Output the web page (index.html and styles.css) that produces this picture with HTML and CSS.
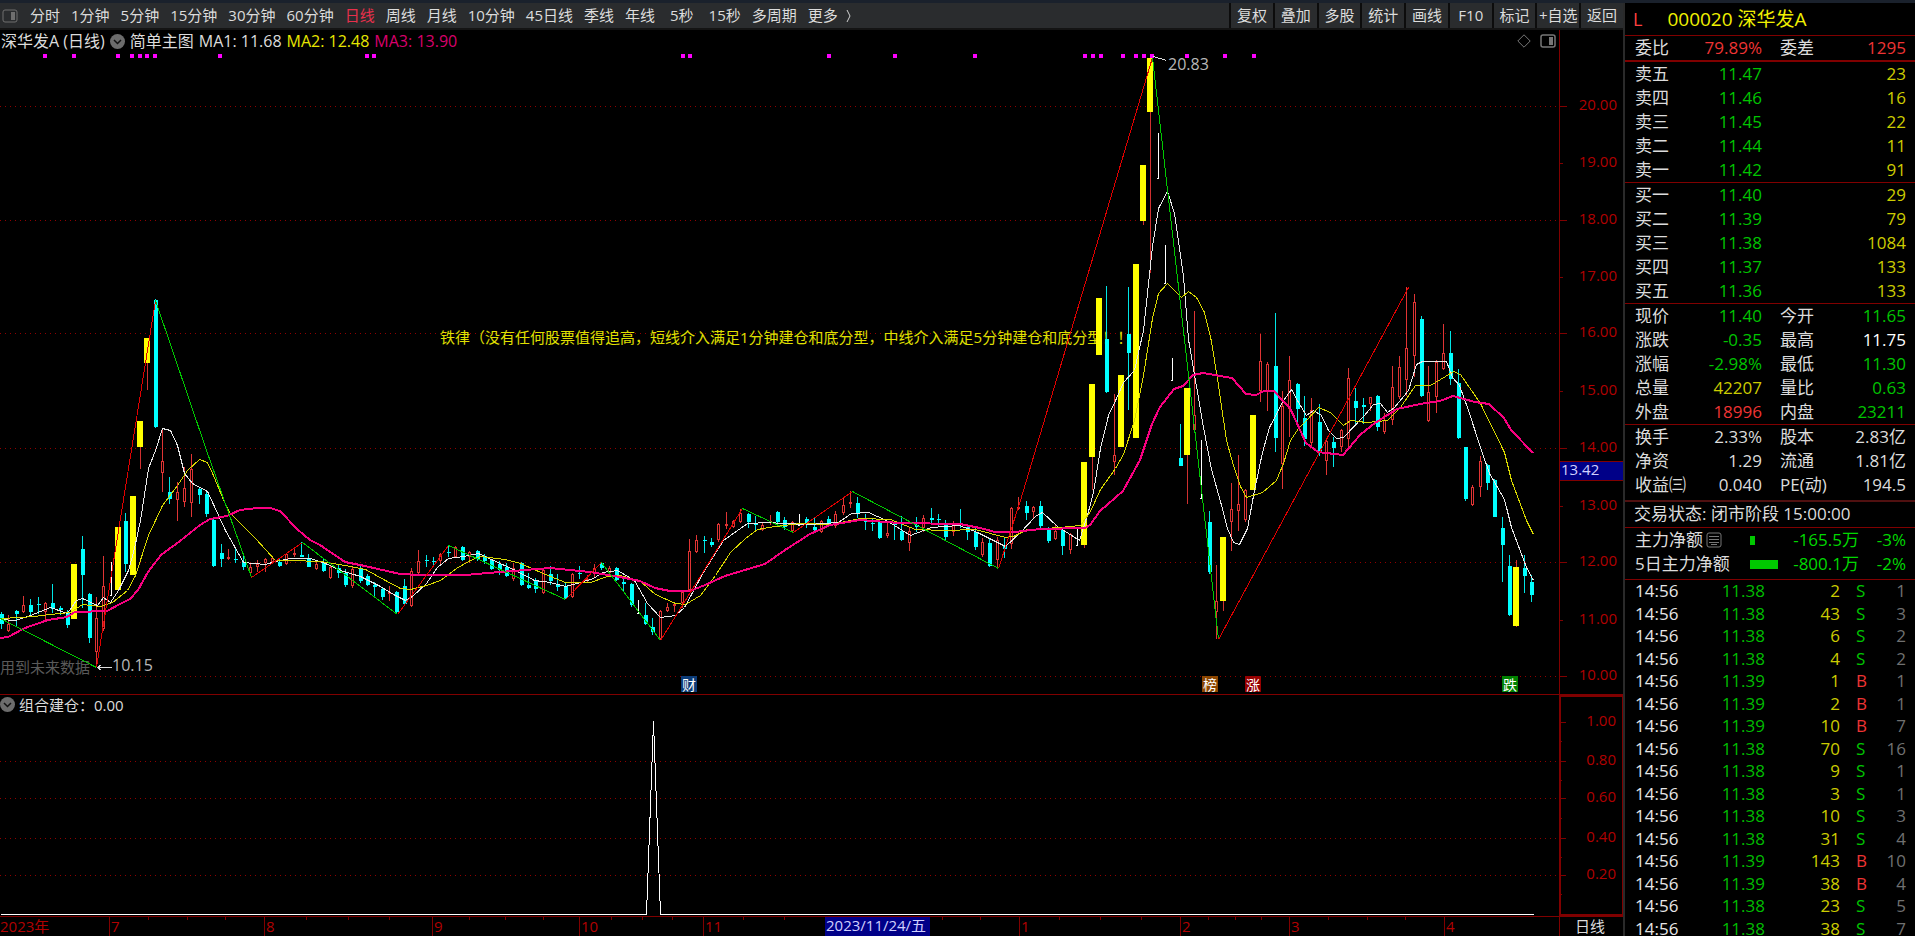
FILE: index.html
```html
<!DOCTYPE html>
<html lang="zh-CN">
<head>
<meta charset="utf-8">
<title>深华发A 日线</title>
<link rel="stylesheet" href="styles.css">
</head>
<body>
<div class="topstrip"></div>
<div class="app">
  <main class="main">
    <nav class="toolbar">
      <div class="periods">
        <button class="panel-toggle" aria-label="侧栏"><svg width="16" height="14" viewBox="0 0 16 14"><rect x="1" y="1" width="14" height="12" rx="2" fill="none" stroke="#6e6e6e"/><rect x="9" y="3" width="4" height="8" fill="#6e6e6e"/></svg></button>
        <button>分时</button><button>1分钟</button><button>5分钟</button><button>15分钟</button><button>30分钟</button><button>60分钟</button><button class="active">日线</button><button>周线</button><button>月线</button><button>10分钟</button><button>45日线</button><button>季线</button><button>年线</button><button class="sec">5秒</button><button class="sec">15秒</button><button>多周期</button><button class="more">更多<svg width="6" height="16" viewBox="0 0 6 16"><path d="M1 2L4 8L1 14" fill="none" stroke="#d0d0d0"/></svg></button>
      </div>
      <div class="tools">
        <button>复权</button><button>叠加</button><button>多股</button><button>统计</button><button>画线</button><button>F10</button><button>标记</button><button>+自选</button><button>返回</button>
      </div>
    </nav>
    <section class="pane price">
      <div class="plot">
        <div class="info">
          <span>深华发A (日线)</span>
          <button class="chev" aria-label="指标"><svg width="15" height="15" viewBox="0 0 15 15"><circle cx="7.500" cy="7.500" r="7.500" fill="#6c6c6c"/><path d="M4 6L7.500 9.500L11 6" fill="none" stroke="#111" stroke-width="1.500"/></svg></button>
          <span>简单主图</span>
          <span class="ma1">MA1: 11.68</span>
          <span class="ma2">MA2: 12.48</span>
          <span class="ma3">MA3: 13.90</span>
          <span class="corner">
            <svg width="14" height="14" viewBox="0 0 14 14"><path d="M7 .8L13.200 7L7 13.200L.8 7Z" fill="none" stroke="#777"/></svg>
            <svg width="16" height="14" viewBox="0 0 16 14"><rect x="1" y="1" width="14" height="12" rx="2" fill="none" stroke="#777" stroke-width="1.500"/><rect x="9" y="3" width="4" height="8" fill="#777"/></svg>
          </span>
        </div>
        <div class="canvas"><svg id="price"></svg></div>
      </div>
      <div class="scale"><svg id="priceScale"></svg></div>
    </section>
    <section class="pane signal">
      <div class="plot">
        <div class="info">
          <button class="chev" aria-label="指标"><svg width="15" height="15" viewBox="0 0 15 15"><circle cx="7.500" cy="7.500" r="7.500" fill="#6c6c6c"/><path d="M4 6L7.500 9.500L11 6" fill="none" stroke="#111" stroke-width="1.500"/></svg></button>
          <span>组合建仓：0.00</span>
        </div>
        <div class="canvas"><svg id="signal"></svg></div>
      </div>
      <div class="scale boxed"><svg id="signalScale"></svg></div>
    </section>
    <section class="dates">
      <div class="canvas"><svg id="dates"></svg></div>
      <div class="period-name">日线</div>
    </section>
  </main>
  <aside class="side">
    <header class="stock"><b class="flag">L</b><h1>000020 深华发A</h1></header>
    <table class="q double">
      <colgroup><col class="k"><col class="v"><col class="k2"><col></colgroup>
      <tr><th>委比</th><td class="r">79.89%</td><th>委差</th><td class="r">1295</td></tr>
    </table>
    <table class="q">
      <colgroup><col class="k"><col class="v"><col></colgroup>
      <tr><th>卖五</th><td class="g">11.47</td><td class="y">23</td></tr>
      <tr><th>卖四</th><td class="g">11.46</td><td class="y">16</td></tr>
      <tr><th>卖三</th><td class="g">11.45</td><td class="y">22</td></tr>
      <tr><th>卖二</th><td class="g">11.44</td><td class="y">11</td></tr>
      <tr><th>卖一</th><td class="g">11.42</td><td class="y">91</td></tr>
    </table>
    <table class="q">
      <colgroup><col class="k"><col class="v"><col></colgroup>
      <tr><th>买一</th><td class="g">11.40</td><td class="y">29</td></tr>
      <tr><th>买二</th><td class="g">11.39</td><td class="y">79</td></tr>
      <tr><th>买三</th><td class="g">11.38</td><td class="y">1084</td></tr>
      <tr><th>买四</th><td class="g">11.37</td><td class="y">133</td></tr>
      <tr><th>买五</th><td class="g">11.36</td><td class="y">133</td></tr>
    </table>
    <table class="q">
      <colgroup><col class="k"><col class="v"><col class="k2"><col></colgroup>
      <tr><th>现价</th><td class="g">11.40</td><th>今开</th><td class="g">11.65</td></tr>
      <tr><th>涨跌</th><td class="g">-0.35</td><th>最高</th><td class="w">11.75</td></tr>
      <tr><th>涨幅</th><td class="g">-2.98%</td><th>最低</th><td class="g">11.30</td></tr>
      <tr><th>总量</th><td class="y">42207</td><th>量比</th><td class="g">0.63</td></tr>
      <tr><th>外盘</th><td class="r">18996</td><th>内盘</th><td class="g">23211</td></tr>
    </table>
    <table class="q thick">
      <colgroup><col class="k"><col class="v"><col class="k2"><col></colgroup>
      <tr><th>换手</th><td>2.33%</td><th>股本</th><td>2.83亿</td></tr>
      <tr><th>净资</th><td>1.29</td><th>流通</th><td>1.81亿</td></tr>
      <tr><th>收益㈢</th><td>0.040</td><th>PE(动)</th><td>194.5</td></tr>
    </table>
    <p class="status">交易状态: 闭市阶段 15:00:00</p>
    <table class="q flow">
      <colgroup><col class="name"><col class="bar"><col class="amt"><col></colgroup>
      <tr><th>主力净额<svg width="16" height="16" viewBox="0 0 16 16"><rect x="1" y="1" width="14" height="14" rx="2" fill="none" stroke="#777"/><path d="M3 4.500H13M3 7.500H13M3 10.500H13M5 12.500H11" stroke="#777"/></svg></th><td><i class="small"></i></td><td>-165.5万</td><td>-3%</td></tr>
      <tr><th>5日主力净额</th><td><i class="large"></i></td><td>-800.1万</td><td>-2%</td></tr>
    </table>
    <div class="ticks">
      <table class="t">
        <colgroup><col class="time"><col class="prc"><col class="vol"><col class="dir"><col></colgroup>
        <tr><td>14:56</td><td>11.38</td><td>2</td><td>S</td><td>1</td></tr>
        <tr><td>14:56</td><td>11.38</td><td>43</td><td>S</td><td>3</td></tr>
        <tr><td>14:56</td><td>11.38</td><td>6</td><td>S</td><td>2</td></tr>
        <tr><td>14:56</td><td>11.38</td><td>4</td><td>S</td><td>2</td></tr>
        <tr class="buy"><td>14:56</td><td>11.39</td><td>1</td><td>B</td><td>1</td></tr>
        <tr class="buy"><td>14:56</td><td>11.39</td><td>2</td><td>B</td><td>1</td></tr>
        <tr class="buy"><td>14:56</td><td>11.39</td><td>10</td><td>B</td><td>7</td></tr>
        <tr><td>14:56</td><td>11.38</td><td>70</td><td>S</td><td>16</td></tr>
        <tr><td>14:56</td><td>11.38</td><td>9</td><td>S</td><td>1</td></tr>
        <tr><td>14:56</td><td>11.38</td><td>3</td><td>S</td><td>1</td></tr>
        <tr><td>14:56</td><td>11.38</td><td>10</td><td>S</td><td>3</td></tr>
        <tr><td>14:56</td><td>11.38</td><td>31</td><td>S</td><td>4</td></tr>
        <tr class="buy"><td>14:56</td><td>11.39</td><td>143</td><td>B</td><td>10</td></tr>
        <tr class="buy"><td>14:56</td><td>11.39</td><td>38</td><td>B</td><td>4</td></tr>
        <tr><td>14:56</td><td>11.38</td><td>23</td><td>S</td><td>5</td></tr>
        <tr><td>14:56</td><td>11.38</td><td>38</td><td>S</td><td>7</td></tr>
      </table>
    </div>
  </aside>
</div>
<script src="chart.js"></script>
</body>
</html>
```
FILE: styles.css
```css
* { box-sizing: border-box; }
html, body { height: 100%; }
body {
  margin: 0;
  display: flex;
  flex-direction: column;
  overflow: hidden;
  background: #000;
  color: #dcdcdc;
  font: 15px/22px "Open Sans", "Noto Sans CJK SC", sans-serif;
}
button {
  margin: 0;
  padding: 0;
  border: 0;
  background: none;
  color: inherit;
  font: inherit;
  white-space: nowrap;
}
.topstrip { flex: none; height: 3px; background: #1a212c; }
.app { flex: 1; min-height: 0; display: grid; grid-template-columns: minmax(0, 1fr) 292px; }
.main { min-width: 0; min-height: 0; display: flex; flex-direction: column; }

.toolbar {
  flex: none;
  height: 27px;
  display: flex;
  justify-content: space-between;
  background: #2a2c2e;
  border-bottom: 2px solid #141414;
  line-height: 25px;
}
.periods { display: flex; gap: 11px; padding-left: 2px; }
.panel-toggle { display: flex; align-items: center; margin-right: 1px; }
.active { color: #e8304c; }
.sec { margin-left: 4px; }
.more { display: flex; align-items: center; gap: 8px; }
.tools { flex: none; width: 394px; display: grid; grid-template-columns: repeat(9, 1fr); }
.tools button { border-left: 2px solid #0c0c0c; overflow: hidden; }

.pane { min-height: 0; display: grid; grid-template-columns: minmax(0, 1fr) 64px; }
.price { flex: 665 1 0; border-bottom: 1px solid #800000; }
.signal { flex: 222 1 0; }
.plot { min-width: 0; min-height: 0; display: flex; flex-direction: column; }
.info { flex: none; height: 22px; display: flex; align-items: center; gap: 5px; padding-left: 1px; font-size: 16px; white-space: nowrap; }
.signal .info { padding: 0 0 2px; gap: 4px; font-size: 15px; }
.chev { display: flex; }
.ma2 { color: #e6e600; }
.ma3 { color: #d8006c; }
.corner { display: flex; gap: 9px; margin-left: auto; padding-right: 3px; }
.canvas { flex: 1; min-width: 0; min-height: 0; overflow: hidden; }
.canvas svg, .scale svg { display: block; width: 100%; height: 100%; }
.scale { min-height: 0; overflow: hidden; border-left: 1px solid #800000; }
.boxed { border: 2px solid #800000; border-right-width: 1px; }

.dates { flex: none; height: 20px; display: grid; grid-template-columns: minmax(0, 1fr) 64px; border-top: 1px solid #800000; }
.period-name { border-left: 1px solid #800000; padding-left: 15px; line-height: 19px; }

svg text { font-size: 15px; fill: #b00000; dominant-baseline: central; }
svg .note { fill: #e0e000; }
svg .dim { fill: #5a5a5a; }
svg .mark { fill: #b8b8b8; font-size: 16px; }
svg .badge { fill: #fff; font-size: 14px; }
svg .cursor { fill: #d0d0ff; }

.side { min-height: 0; overflow: hidden; border-left: 2px solid #2a2a2a; display: flex; flex-direction: column; font-size: 17px; line-height: 24px; }
.stock { flex: none; height: 32px; display: flex; align-items: center; gap: 25px; padding-left: 8px; }
.flag { color: #ff4040; font-weight: 400; font-size: 18px; }
.stock h1 { margin: 0; color: #f0f000; font-size: 19px; font-weight: 400; }
table { border-collapse: collapse; table-layout: fixed; width: 100%; }
th, td { padding: 0; font-weight: 400; white-space: nowrap; height: 24px; text-align: right; }
th { text-align: left; }
.q { flex: none; border-top: 1px solid #800000; }
.q th:first-child { padding-left: 10px; }
.q td:last-child { padding-right: 9px; }
.k { width: 62px; }
.v { width: 75px; }
.k2 { width: 72px; }
td + th { padding-left: 18px; }
.double { border-bottom: 1px solid #800000; }
.r { color: #ee3434; }
.g { color: #00c400; }
.y { color: #cccc00; }
.w { color: #fff; }
.status { flex: none; margin: 3px 0 0; padding-left: 9px; border-top: 2px solid #501010; height: 27px; line-height: 24px; }
.flow td { color: #00d800; }
.flow th svg { vertical-align: -2px; margin-left: 3px; }
.name { width: 125px; }
.bar { width: 29px; }
.amt { width: 80px; }
.flow td:nth-child(2) { text-align: left; }
.flow i { display: block; height: 9px; background: #00c800; }
.flow .small { width: 5px; }
.flow .large { width: 28px; }
.ticks { flex: 1; min-height: 0; overflow: hidden; margin-top: 3px; border-top: 1px solid #800000; }
.t td { height: 23px; line-height: 22px; color: #707070; padding-right: 9px; }
.t tr:nth-child(odd) td { height: 22px; }
.time { width: 70px; }
.prc { width: 70px; }
.vol { width: 75px; }
.dir { width: 35px; }
.t td:nth-child(-n+3) { padding-right: 0; }
.t td:first-child { text-align: left; padding-left: 10px; color: #e6e6e6; }
.t td:nth-child(2) { color: #00bc00; }
.t td:nth-child(3) { color: #cccc00; }
.t td:nth-child(4) { color: #00c400; text-align: left; padding: 0 0 0 16px; }
.t .buy td:nth-child(4) { color: #ee3434; }
```
FILE: chart.js
```js
// Candles, one per day: kind, high, low, body top, body bottom.
// r hollow rise, c solid fall, y limit day, w doji stick.
const candles = `c612,629,614,624 r615,632,624,631 c610,626,611,614 r596,613,605,612 c599,617,605,612 c597,614,604,605 r602,620,603,612 c584,613,603,609 c606,615,608,610 c610,628,613,625
y564,619,564,619 c536,608,549,575 c593,643,594,638 r597,667,618,652 r556,631,586,629 w562,595,0,0 y527,590,527,590 c513,572,521,564 y496,575,496,575 y421,469,421,447
y338,390,338,363 c299,428,300,427 r430,492,461,473 c477,504,492,499 r482,521,492,500 r467,507,488,502 r454,517,469,503 c488,504,489,495 c492,517,494,514 c519,567,520,566
c544,567,553,559 r549,560,557,559 c549,563,559,560 c553,570,562,567 r564,576,567,573 r560,572,564,567 r558,572,559,563 r557,563,558,562 c559,567,562,566 r553,565,554,564
r549,557,553,555 c542,557,555,557 c554,567,559,567 r561,569,564,569 c559,572,563,571 r565,579,567,578 c564,578,568,573 c569,587,573,585 r567,588,569,586 c566,583,568,581
c574,586,576,585 c582,598,585,587 c588,600,589,597 r586,601,592,593 c591,614,592,612 c579,606,586,604 r568,607,571,606 r550,574,561,573 c555,567,560,561 c557,566,561,562
r553,566,554,561 c545,557,552,553 r546,557,547,557 c546,561,547,560 r551,563,552,557 c550,561,551,559 c554,564,556,561 c559,570,560,569 c561,575,564,570 c563,577,567,576
r563,581,568,579 c562,586,563,585 c573,589,585,588 c578,593,581,589 r569,594,570,593 c566,585,574,581 c574,591,585,587 c583,599,586,598 r573,597,574,597 c566,579,573,574
r575,582,579,581 r564,577,568,573 c562,570,563,568 r566,575,568,573 c567,581,568,580 c579,591,582,584 c583,607,584,605 w600,613,0,0 c603,625,615,624 c618,635,627,632
r610,640,611,639 r603,612,607,611 r602,612,604,606 r591,608,592,603 r539,591,551,590 r535,553,540,552 c536,553,540,541 c538,547,542,545 r523,542,524,540 r512,529,524,525
r520,528,521,527 r509,523,513,522 c513,528,514,522 c516,530,524,525 r523,531,525,530 r515,525,521,523 c511,523,512,522 c517,530,520,527 r521,532,522,531 w514,525,0,0
c517,528,519,523 c518,531,527,530 r520,533,521,532 c516,527,519,525 r511,528,514,526 r498,515,505,513 r491,508,502,504 c497,518,503,513 c514,530,520,522 c519,531,523,524
c521,539,522,538 r523,538,533,536 c521,540,524,525 c516,541,531,540 r527,551,531,543 c517,532,525,527 r515,532,518,528 c508,525,518,520 c514,527,519,520 c520,540,525,537
r521,536,523,532 c509,528,523,524 c524,540,527,532 c527,550,532,547 r538,557,542,555 c538,567,543,566 r537,568,540,560 c538,558,546,549 r507,549,508,544 r497,510,507,508
c501,520,506,513 r506,518,507,512 c501,528,506,526 c527,543,528,541 r524,540,531,539 c528,555,530,546 r533,554,534,550 w528,545,0,0 y462,548,462,545 y384,490,384,457
y298,355,298,355 c286,393,339,392 r394,475,455,462 y375,447,375,447 c287,410,334,353 y264,438,264,438 y165,225,165,221 y58,273,58,112 w133,178,0,0 w245,283,0,0
w358,380,0,0 c424,466,458,466 y388,504,388,455 r311,431,415,430 w440,498,0,0 c511,574,522,572 r565,639,601,612 y537,611,537,601 r483,551,509,522 r455,531,504,511
r489,522,490,520 y415,490,415,490 r334,402,361,391 r362,411,364,391 c313,452,366,438 r391,489,406,464 r356,437,380,409 c383,422,384,409 c396,446,418,439 r398,448,410,443
c404,456,422,451 r438,475,441,461 c437,467,442,448 r429,452,430,447 r368,447,378,439 c388,424,401,408 c398,424,405,407 r397,411,397,404 c395,431,396,427 r413,434,420,432
r366,425,387,420 r356,399,367,397 r287,396,348,380 r294,377,302,356 c316,397,319,396 r366,422,392,421 r360,413,362,397 r324,370,353,369 c331,385,353,379 c369,439,383,438
c447,501,447,499 r485,506,487,505 r456,497,461,487 c464,490,465,483 c479,517,480,517 c517,582,528,545 c555,616,566,615 y560,627,567,626 c555,593,568,576 c575,602,582,595`.split(/\s+/);

const ma1 = "0,619 15,620 30,615 50,607 67,613 76,600 82,598 97,605 103,597 110,602 118,590 128,570 134,548 140,520 148,468 155,450 162,428 170,430 177,445 184,473 192,483 207,491 225,530 243,562 265,564 275,561 290,558 310,558 325,563 340,570 360,576 378,585 395,595 405,600 412,596 426,583 437,567 448,558 463,556 478,553 493,560 513,569 534,580 550,582 565,586 580,582 593,578 602,572 617,570 634,580 647,603 660,617 675,615 684,607 704,570 723,540 747,523 769,522 782,523 808,524 838,522 851,513 868,512 886,520 910,535 931,527 959,525 977,532 1005,546 1020,532 1035,516 1042,512 1057,526 1079,540 1088,511 1093,492 1100,448 1108,415 1116,398 1123,382 1134,370 1143,330 1152,246 1158,208 1167,191 1174,213 1183,276 1188,339 1203,427 1211,469 1220,501 1227,528 1233,542 1239,544 1247,528 1254,490 1262,452 1269,427 1283,400 1291,389 1298,402 1306,415 1313,410 1321,415 1328,430 1336,438 1343,437 1364,415 1373,404 1380,403 1387,412 1394,407 1408,390 1416,364 1422,361 1446,361 1452,377 1459,385 1467,407 1482,453 1489,473 1504,499 1511,527 1526,567 1533,580";
const ma2 = "0,618 20,617 33,616 50,614 70,612 82,604 100,606 112,602 127,590 135,575 148,535 162,505 177,485 187,470 199,459 207,462 213,475 222,497 229,512 240,523 255,538 275,560 290,560 320,561 345,565 365,569 385,580 400,588 410,589 426,585 440,580 456,568 470,560 480,556 505,559 520,563 545,574 565,582 590,582 607,576 620,575 640,581 655,594 675,603 685,604 700,595 715,575 730,552 745,538 757,529 775,526 800,523 830,524 860,518 890,519 915,529 945,530 975,529 1005,537 1013,536 1027,529 1060,527 1080,525 1090,511 1100,489 1115,468 1123,454 1134,420 1143,375 1152,318 1158,293 1167,283 1174,290 1181,297 1188,291 1196,297 1204,312 1211,341 1218,385 1226,440 1233,465 1240,486 1246,497 1262,492 1276,480 1283,463 1290,440 1298,428 1306,420 1318,407 1330,412 1343,425 1350,420 1366,422 1387,420 1400,407 1415,385 1430,385 1445,376 1453,371 1460,374 1480,403 1504,452 1511,480 1526,520 1533,534";
const ma3 = "0,638 8,637 25,628 48,620 67,617 75,612 107,611 120,604 130,599 138,590 148,572 161,555 180,541 200,525 210,519 227,516 240,510 258,508 270,508 280,511 297,529 310,540 320,545 345,562 365,566 400,574 420,575 465,575 500,572 550,568 590,572 620,577 640,581 655,588 670,591 690,591 705,585 725,576 765,564 785,550 810,534 830,525 860,520 900,523 960,524 980,528 995,532 1015,532 1040,529 1085,528 1090,525 1100,511 1123,491 1140,460 1152,424 1160,407 1174,389 1183,386 1193,375 1203,373 1232,378 1246,394 1256,395 1264,391 1274,391 1282,400 1290,408 1306,443 1318,452 1343,455 1360,435 1375,423 1397,409 1420,404 1440,401 1453,396 1475,402 1489,404 1504,418 1511,430 1533,453";
const swings = [
  ["0,618 96,667", 0], ["96,667 155,300", 1], ["155,300 205,447 251,577", 0], ["251,577 302,542", 1], ["302,542 397,614", 0],
  ["397,614 448,545", 1], ["448,545 565,599", 0], ["565,599 601,562", 1], ["601,562 660,640", 0], ["660,640 742,508", 1],
  ["742,508 793,532", 0], ["793,532 852,491", 1], ["852,491 998,568", 0], ["998,568 1020,500 1152,57", 1],
  ["1152,57 1218,639", 0], ["1218,639 1408,287", 1]];
const dots = [44, 73, 117, 131, 139, 146, 154, 219, 366, 373, 682, 689, 828, 894, 974, 1084, 1092, 1100, 1122, 1135, 1143, 1151, 1186, 1224, 1253];
const months = [[109, "7"], [264, "8"], [432, "9"], [579, "10"], [703, "11"], [1019, "1"], [1180, "2"], [1289, "3"], [1444, "4"]];
const weeks = [148, 187, 225, 306, 348, 389, 469, 505, 543, 611, 642, 672, 743, 784, 942, 980, 1059, 1100, 1141, 1208, 1235, 1261, 1328, 1367, 1405];

// Data units span the plot; lengths follow the window, text does not.
function view(id, x0, y0, w, h) {
  const el = document.getElementById(id);
  const kx = el.clientWidth / w, ky = el.clientHeight / h;
  const X = v => Math.round((v - x0) * kx), Y = v => Math.round((v - y0) * ky);
  const rect = (x, y, w, h, c) => `<rect x="${x}" y="${y}" width="${w}" height="${Math.max(1, h)}" fill="${c}"/>`;
  const text = (x, y, s, cls = "", anchor = "start") => `<text x="${X(x)}" y="${Y(y)}" class="${cls}" text-anchor="${anchor}">${s}</text>`;
  const line = (pts, c, w = 1) => `<polyline shape-rendering="crispEdges" fill="none" stroke="${c}" stroke-width="${w}" points="${pts.split(" ").map(p => { const [a, b] = p.split(","); return (X(+a) + (w % 2) / 2) + "," + (Y(+b) + (w % 2) / 2); }).join(" ")}"/>`;
  const grid = y => `<path d="M0 ${Y(y) + .5}H${el.clientWidth}" stroke="#900000" stroke-dasharray="1 4"/>`;
  return { el, X, Y, rect, text, line, grid };
}

function drawPrice() {
  const v = view("price", 0, 52, 1559, 642), { X, Y, rect, text, line } = v;
  let s = [106, 220, 333, 448, 562, 676].map(v.grid).join("");
  s += text(440, 337, "铁律（没有任何股票值得追高，短线介入满足1分钟建仓和底分型，中线介入满足5分钟建仓和底分型！！", "note");
  s += rect(0, Y(658), 92, 20, "#000") + text(0, 667, "用到未来数据", "dim");
  candles.forEach((c, i) => {
    const k = c[0], [h, l, t, b] = c.slice(1).split(",").map(Number), x = X(1 + i * 7.32);
    const wick = (a, z, col) => rect(x, Y(a), 1, Y(z) - Y(a), col);
    if (k === "w") s += wick(h, l, "#fff") + rect(x - 1, Y(l), 2, 1, "#fff");
    if (k === "r") s += wick(h, t, "#e03434") + wick(b, l, "#e03434") + `<rect x="${x - .5}" y="${Y(t) + .5}" width="2" height="${Math.max(1, Y(b) - Y(t) - 1)}" fill="#000" stroke="#e03434"/>`;
    if (k === "c") s += wick(h, l, "#00e6e6") + rect(x - 1, Y(t), 4, Y(b) - Y(t), "#00ffff");
    if (k === "y") s += wick(h, l, "#d03030") + rect(x - 3, Y(t), 6, Y(b) - Y(t), "#ffff00");
  });
  s += line(ma1, "#e8e8e8") + line(ma2, "#d8d800") + line(ma3, "#f80080", 2);
  s += swings.map(([p, up]) => line(p, up ? "#e00000" : "#00c800")).join("");
  s += dots.map(x => rect(X(x) - 1, Y(54), 4, 4, "#ff00ff")).join("");
  s += line("1153,56 1166,60", "#ddd") + text(1168, 64, "20.83", "mark");
  s += line("96,667 111,667", "#ddd") + line("101,664 97,667 101,670", "#ddd") + text(112, 665, "10.15", "mark");
  [[681, "财", "#0c3c78"], [1202, "榜", "#8c4600"], [1245, "涨", "#960000"], [1502, "跌", "#008200"]].forEach(([x, t, c]) => {
    s += rect(X(x), Y(676), 16, 16, c) + text(x + 1, 684, t, "badge");
  });
  v.el.innerHTML = s;
}

function drawPriceScale() {
  const v = view("priceScale", 0, 30, 63, 664);
  let s = "";
  [106, 163, 220, 277, 333, 391, 448, 506, 562, 620, 676].forEach((y, i) => {
    s += v.rect(0, v.Y(y), i % 2 ? 3 : 7, 1, "#800000") + v.text(57, y - 2, (20 - i).toFixed(2), "", "end");
  });
  s += v.rect(0, v.Y(461), 63, 20, "#800000") + v.rect(0, v.Y(461) + 1, 63, 18, "#000088") + v.text(1, 469, "13.42", "cursor");
  v.el.innerHTML = s;
}

function drawSignal() {
  const v = view("signal", 0, 717, 1559, 199);
  v.el.innerHTML = [761, 798, 837, 874].map(v.grid).join("") + v.line("0,913 646,913 653,721 660,913 1533,913", "#fff");
  const a = view("signalScale", 0, 697, 61, 217);
  a.el.innerHTML = [[722, "1.00"], [761, "0.80"], [798, "0.60"], [837, "0.40"], [874, "0.20"]]
    .map(([y, t]) => a.rect(0, a.Y(y), 5, 1, "#800000") + a.rect(0, a.Y(y + 19), 1, 1, "#800000") + a.text(55, y - 2, t, "", "end")).join("");
}

function drawDates() {
  const v = view("dates", 0, 917, 1559, 19);
  let s = v.text(0, 926, "2023年");
  s += months.map(([x, t]) => v.rect(v.X(x), 0, 1, 19, "#800000") + v.text(x + 2, 926, t)).join("");
  s += weeks.map(x => v.rect(v.X(x), 0, 1, 3, "#800000")).join("");
  s += v.rect(v.X(825), 0, 105, 19, "#000088") + v.text(826, 925, "2023/11/24/五", "cursor");
  v.el.innerHTML = s;
}

function draw() { drawPrice(); drawPriceScale(); drawSignal(); drawDates(); }
draw();
addEventListener("resize", draw);
```
